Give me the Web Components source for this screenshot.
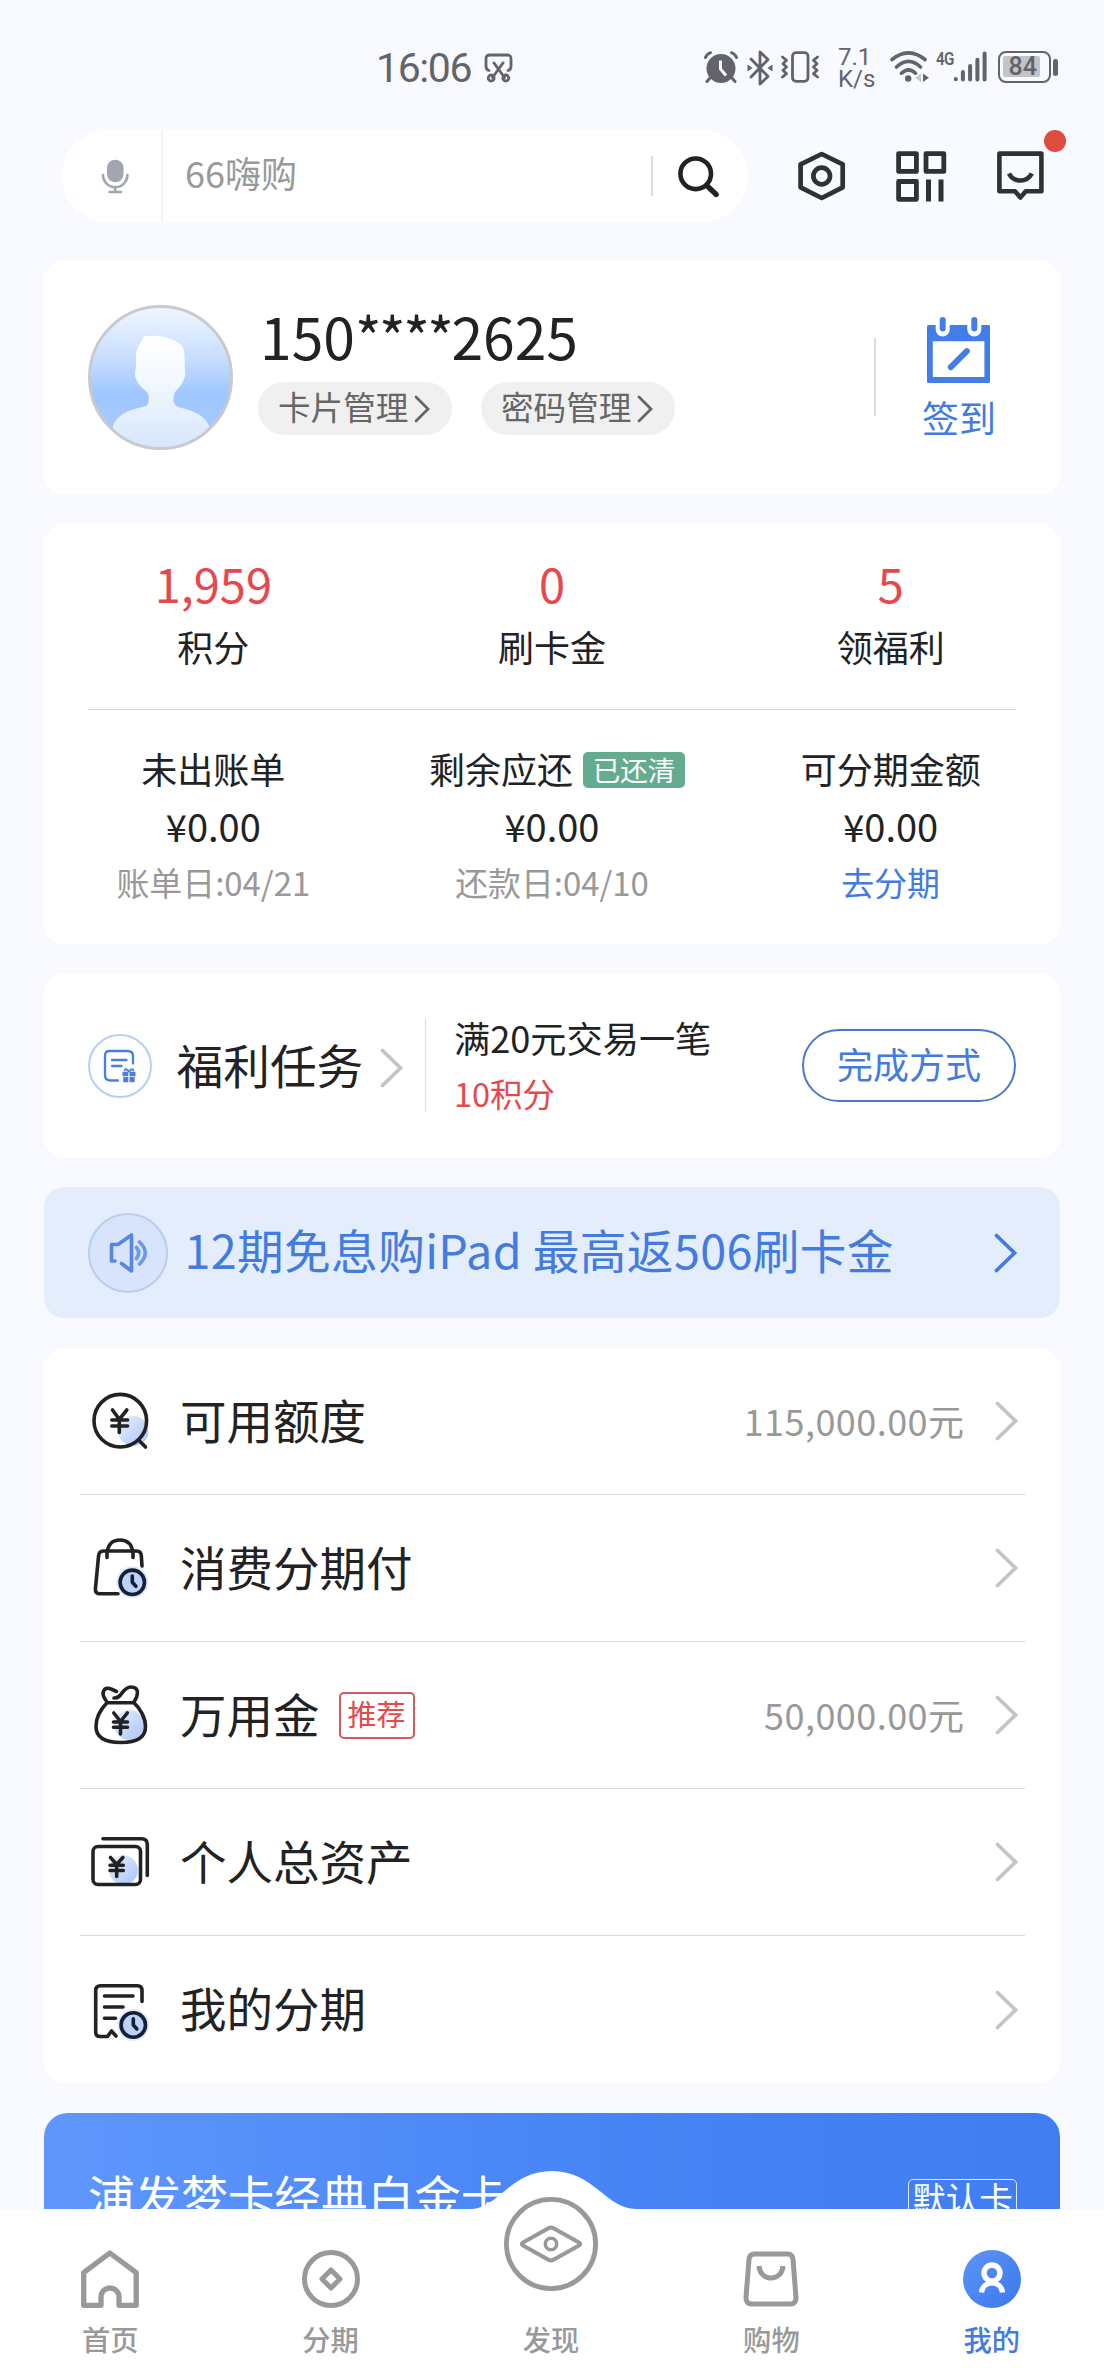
<!DOCTYPE html>
<html lang="zh-CN">
<head>
<meta charset="utf-8">
<title>我的</title>
<style>
html,body{margin:0;padding:0}
body{width:1104px;height:2376px;overflow:hidden;background:#f8faff;font-family:"Noto Sans CJK SC","Noto Sans",sans-serif;color:#222;-webkit-font-smoothing:antialiased}
</style>
</head>
<body>
<mine-page></mine-page>
<script>
const define = (name, html, init) => {
  const tpl = document.createElement('template');
  tpl.innerHTML = html;
  customElements.define(name, class extends HTMLElement {
    constructor() {
      super();
      this.attachShadow({mode: 'open'}).append(tpl.content.cloneNode(true));
    }
    connectedCallback() { if (init) init(this, this.shadowRoot); }
  });
};

const DEFS = `<defs><linearGradient id="g" x1="0" y1="0" x2="1" y2="1"><stop offset="0" stop-color="#e6effe"/><stop offset="1" stop-color="#a9c5fb"/></linearGradient></defs>`;
const CLOCK = (x, y) => `<circle cx="${x}" cy="${y}" r="16" fill="#dfeafe" stroke="none"/><circle cx="${x}" cy="${y}" r="12.2" fill="#bcd2fb" stroke="#142033" stroke-width="3.6"/><path d="M${x} ${y-6.2}V${y}l3.6 4" stroke="#142033" stroke-width="3.6"/>`;
const DARK = 'fill="none" stroke="#222" stroke-width="3.6" stroke-linecap="round" stroke-linejoin="round"';
const ICONS = {
  snip: [30, 30, `<g fill="none" stroke="#63646a" stroke-width="2.8" stroke-linecap="round"><path d="M5 17.5C2.8 17 2 16 2 13V6C2 3 3.2 2 6 2h17c3 0 4 1 4 4v7c0 3-.8 4-3 4.500M10 10l10.500 14.500M19 10L8.500 24.500"/><circle cx="7.200" cy="25" r="3"/><circle cx="21.800" cy="25" r="3"/></g>`],
  alarm: [34, 32, `<circle cx="17" cy="17.500" r="14.500" fill="#63646a"/><path d="M16.500 9.500v8.500l5.500 6.500" fill="none" stroke="#f8faff" stroke-width="3"/><path d="M1.500 6.500Q3 3 6.500 1.700M32.500 6.500Q31 3 27.500 1.700M6 27l-3 3.500M28 27l3 3.500" fill="none" stroke="#63646a" stroke-width="3" stroke-linecap="round"/>`],
  bt: [26, 36, `<path d="M4 9l17 17.500-8 7.500V2l8 7.500L4 27" fill="none" stroke="#63646a" stroke-width="2.800" stroke-linejoin="round" stroke-linecap="round"/><path d="M.5 14.500l5 3.500-5 3.500zM25.500 14.500l-5 3.500 5 3.500z" fill="#63646a"/>`],
  vibrate: [38, 32, `<g fill="none" stroke="#63646a" stroke-width="2.800" stroke-linejoin="round" stroke-linecap="round"><rect x="11.500" y="1.700" width="15.500" height="28.600" rx="3.500"/><path d="M1.500 6l4 3.300-3.500 3.400 3.500 3.300-3.500 3.300 3.500 3.400-4 3.300M36.500 6l-4 3.300 3.500 3.400-3.500 3.300 3.500 3.300-3.500 3.400 4 3.300"/></g>`],
  wifi: [40, 32, `<g fill="none" stroke="#63646a" stroke-width="3.600" stroke-linecap="round"><path d="M2 8.500Q18.500-4.800 35 8.500M6.500 16Q18.500 4.800 30.500 16M11.500 22.200Q18.500 15.500 25.500 22.200"/></g><circle cx="18.200" cy="27.500" r="3.200" fill="#63646a"/><path d="M31 22.500v8.500l-6-4.200z" fill="#c4c6ca"/><path d="M33 22.500v8.500l6-4.200z" fill="#63646a"/>`],
  signal: [34, 32, `<g stroke="#63646a" stroke-width="4" stroke-linecap="round"><path d="M2.800 28v.3M9.900 21v7.500M17.100 15v13.500M24.400 8.800v19.700M31.600 2.500v26"/></g>`],
  mic: [30, 38, `<rect x="7" y="1.700" width="16.500" height="22.600" rx="8.200" fill="#a3a6b1"/><path d="M3 17a12.200 12.200 0 0 0 24.400 0M15.200 29v5M9.500 34h11.500" fill="none" stroke="#a3a6b1" stroke-width="2.600" stroke-linecap="round"/>`],
  search: [44, 44, `<circle cx="19.700" cy="19.800" r="15.300" fill="none" stroke="#222" stroke-width="4.600"/><path d="M30.800 31.500l9.400 9" stroke="#222" stroke-width="5.200" stroke-linecap="round"/>`],
  hex: [48, 50, `<g fill="none" stroke="#2f3133" stroke-width="4.700" stroke-linejoin="round"><path d="M23.700 3L44.700 13.300V36.300L23.700 47 2.600 36.300V13.300Z"/><circle cx="23.700" cy="25" r="8.300"/></g>`],
  qr: [51, 51, `<g fill="none" stroke="#2f3133" stroke-width="4.800" stroke-linejoin="round"><rect x="2.600" y="2.600" width="17.800" height="17.800"/><rect x="30" y="2.600" width="17.800" height="17.800"/><rect x="2.600" y="30.500" width="17.800" height="17.800"/></g><path d="M30 28.500h5v22h-5zM42.500 28.500h5v22h-5z" fill="#2f3133"/>`],
  msg: [47, 51, `<g fill="none" stroke="#2f3133" stroke-width="4.600"><path stroke-linejoin="round" d="M2.400 2.600H44.400V40.300H28.800L23.400 46.500 18 40.300H2.400Z"/><path d="M12 22.500Q15.500 29.500 23.300 29.500T34.800 22.500"/></g>`],
  avatar: [145, 145, `<defs><linearGradient id="a" x1="0" y1="0" x2="0" y2="1"><stop offset="0" stop-color="#f0f6ff"/><stop offset=".35" stop-color="#c9dffe"/><stop offset=".62" stop-color="#9fc6ff"/><stop offset="1" stop-color="#a9cbfd"/></linearGradient><linearGradient id="p" x1="0" y1="0" x2="0" y2="1"><stop offset="0" stop-color="#fff"/><stop offset=".4" stop-color="#f3f8ff"/><stop offset="1" stop-color="#d6e6fc"/></linearGradient><clipPath id="c"><circle cx="72.500" cy="72.500" r="70"/></clipPath></defs><circle cx="72.500" cy="72.500" r="71" fill="url(#a)"/><path clip-path="url(#c)" fill="url(#p)" d="M56 31.500C72 29 88 34 94 41 98 47 96 57 97 65 99 71 94 80 87 87 85 93 84 99 90 102 102 105 117 109 121 121L127 145H18L25 121C30 107 46 104 58 101 62 98 61 90 59 87 51 81 45 73 47.500 65 49 57 46 47 51 40 54 37 54 34 56 31.500Z"/><circle cx="72.500" cy="72.500" r="71" fill="none" stroke="#c8cacd" stroke-width="3"/>`],
  calendar: [68, 70, `<rect x="2" y="10" width="63" height="58" rx="1.500" fill="#437de9"/><path d="M7.800 26.300h51.600v35.600H7.800z" fill="#fff"/><g stroke-linecap="round"><path d="M17.700 3v11.500M49.300 3v11.500" stroke="#fff" stroke-width="14"/><path d="M17.700 5v8.500M49.300 5v8.500" stroke="#437de9" stroke-width="6"/><path d="M25.800 52.200l16-16" stroke="#437de9" stroke-width="6"/></g>`],
  task: [64, 64, `<circle cx="32" cy="32" r="31" fill="#fdfeff" stroke="#b9cff2" stroke-width="2"/><g fill="none" stroke="#4a7fe0" stroke-width="2.300" stroke-linecap="round"><path d="M30 46.500H22.500C18.500 46.500 17 44.500 17 41V21.500C17 18.500 18.500 17 21.500 17H39.500C43.500 17 45 18.500 45 22V29.500M24 26h14.500M24 32h9.500"/></g><path d="M34.500 37.800h5.800v4.400h-5.800zM41.500 37.800h6v4.400h-6zM35.200 43h5.100v5.300h-5.100zM41.500 43h5.200v5.300h-5.200z" fill="#4a7fe0"/><path d="M41 38c-2-4-5-3-4-1M41 38c2-4 5-3 4-1" fill="none" stroke="#4a7fe0" stroke-width="1.800"/>`],
  speaker: [80, 80, `<circle cx="40" cy="40" r="39" fill="#d7e4fb" stroke="#bacdee" stroke-width="2"/><g fill="none" stroke="#5587e0" stroke-width="3.600" stroke-linecap="round" stroke-linejoin="round"><path d="M27 48H23.500V31.500H30L43.500 22V58L33.500 50.500"/></g><g fill="none" stroke="#6b98ea" stroke-width="3.600" stroke-linecap="round"><path d="M48.500 34.500Q53 40 48.500 45.500M51.500 29Q63 40 51.500 51"/></g>`],
  quota: [64, 64, `${DEFS}<circle cx="45.500" cy="42" r="15" fill="url(#g)"/><g ${DARK}><circle cx="32.300" cy="31.700" r="26.300"/><path d="M24.500 21l6.800 9.300 7.500-9.300M31.300 30.500V43.500M23.800 31h15.800M23.800 37h15.800M52 52.500l5.500 5.500"/></g>`],
  bagpay: [64, 64, `<g ${DARK}><path d="M30 57.800H12C8.500 57.800 7.200 56 7.400 53L10.600 19.500C11 16.500 12.500 15 15.500 15H48.500C52 15 53 16.500 53.300 19.500L54 30M19 21.500V17C20 8 25 4 32 4S44 8 45 17V21.500"/>${CLOCK(44.300, 46.300)}</g>`],
  sack: [64, 64, `${DEFS}<circle cx="41" cy="42" r="15" fill="url(#g)"/><g ${DARK}><path d="M19 19C11 9 17 3 23 6L28.500 8.500M26 15C34 16 34 4 43 4 51 4 51 11 46 19M19 19.800H46C52 25 57.500 35 57.500 43.500 57.500 55 48 59.500 33 59.500S8 55 8 43.500C8 35 13 26 19 19.800M25.800 30l6.700 8.500 6.800-8.500M32.500 38.500V51M25.500 39h14M25.500 44.300h14"/></g>`],
  assets: [64, 64, `${DEFS}<circle cx="35.500" cy="40" r="14.500" fill="url(#g)"/><g ${DARK}><rect x="5" y="16.500" width="47.500" height="38" rx="5"/><path d="M15 8.700H53.500C57.500 8.700 59.300 10.500 59.300 14.500V45.500M22.500 27.500l6.200 7 6.200-7M28.700 34.500V46.500M22 35.300h13.300M22 40.500h13.300"/></g>`],
  bill: [64, 64, `<g ${DARK}><path d="M54 23.500V12.500C54 9 52.500 7.700 49.500 7.700H12.500C9.300 7.700 7.700 9 7.700 12.500V54C7.700 57 9 58.500 12 58.500H19.500L23.500 53 28 58M16.500 18h28.500M16.500 29h18.500M16.500 40.300h11"/>${CLOCK(45.300, 47)}</g>`],
  home: [60, 60, `<path d="M3.700 56.300V23.700L29.800 4 56.200 23.700V56.300H39V48a9 9 0 0 0-18 0V56.300Z" fill="none" stroke="#999" stroke-width="5.300" stroke-linejoin="round"/>`],
  coin: [60, 60, `<g fill="none" stroke="#999"><circle cx="30" cy="30" r="26.500" stroke-width="5"/><path d="M30 21L39 30 30 39 21 30Z" stroke-width="5" stroke-linejoin="round"/></g>`],
  eye: [94, 94, `<g fill="none" stroke="#999"><circle cx="47" cy="47" r="44.600" stroke-width="4.800"/><path d="M44 31.500Q47 29.500 50 31.500L75 45.500Q77.500 47 75 48.500L50 62.500Q47 64.500 44 62.500L19 48.500Q16.500 47 19 45.500Z" stroke-width="4"/><circle cx="47" cy="47" r="5.700" stroke-width="3.600"/></g>`],
  bag: [60, 60, `<g fill="none" stroke="#999" stroke-width="5"><path d="M13.500 5H46.500Q51.500 5 52 10.500L55 48.500Q55 55 49.500 55H10.500Q5 55 5 48.500L8 10.500Q8.500 5 13.500 5Z"/><path d="M18 17C19 33 41 33 42 17"/></g>`],
  me: [60, 60, `<defs><linearGradient id="m" x1="0" y1="0" x2="1" y2="1"><stop offset="0" stop-color="#5c94f8"/><stop offset="1" stop-color="#3b78ec"/></linearGradient></defs><circle cx="30" cy="30" r="29" fill="url(#m)"/><g fill="none" stroke="#fff" stroke-width="5.400"><circle cx="30" cy="24" r="8"/><path d="M19.500 43.500C21 30.500 39 30.500 40.500 43.500"/></g>`],
  chev: [24, 40, `<path d="M2.500 2.500L20.500 20 2.500 37.500" fill="none" stroke="currentColor" stroke-width="3.700" stroke-linecap="round"/>`],
  chevs: [18, 28, `<path d="M3 2L15 14 3 26" fill="none" stroke="currentColor" stroke-width="2.800" stroke-linecap="round"/>`]
};
define('ui-icon', `<style>:host{display:block;flex:none;line-height:0}svg{display:block}</style><span></span>`, (el, root) => {
  const [w, h, body] = ICONS[el.getAttribute('name')];
  root.querySelector('span').innerHTML = `<svg width="${w}" height="${h}" viewBox="0 0 ${w} ${h}">${body}</svg>`;
});

define('status-bar', `<style>
:host{display:flex;height:130px;box-sizing:border-box;padding:50px 45px 0 376px;align-items:flex-start;color:#63646a;font-family:Roboto,"Noto Sans",sans-serif}
.time{font-size:41px;line-height:36px;letter-spacing:-1.400px;width:108px;font-weight:400}
.snip{padding-top:3px;width:220px}
.speed{font-size:24px;width:52px;margin-top:-7px}
.speed span{display:block;height:21.500px;line-height:28px}
.g{font-size:19px;line-height:18px;font-weight:600;width:17px;letter-spacing:-1px;transform:scaleX(.8);transform-origin:left}
.bat{box-sizing:border-box;width:53px;height:32px;border:2.500px solid #63646a;border-radius:8px;padding:3px;margin-top:1px}
.fill{display:block;width:37px;height:21px;background:#c3c4c8;border-radius:2px;font-size:25px;font-weight:500;line-height:22px;padding-left:6px;white-space:nowrap;box-sizing:border-box}
.nub{width:5px;height:17px;border-radius:3px;background:#63646a;margin:9px 0 0 2px}
</style>
<div class="time">16:06</div><div class="snip"><ui-icon name="snip"></ui-icon></div>
<ui-icon name="alarm" style="padding-top:1px;width:43px"></ui-icon>
<ui-icon name="bt" style="width:34px"></ui-icon>
<ui-icon name="vibrate" style="padding-top:1px;width:57px"></ui-icon>
<div class="speed"><span>7.1</span><span>K/s</span></div>
<ui-icon name="wifi" style="padding-top:1px;width:46px"></ui-icon>
<div class="g">4G</div>
<ui-icon name="signal" style="padding-top:1px;width:44.500px"></ui-icon>
<div class="bat"><span class="fill">84</span></div><div class="nub"></div>`);

define('search-header', `<style>
:host{display:flex;height:92px;padding-left:62px;align-items:center}
.pill{display:flex;align-items:center;width:686px;height:92px;border-radius:46px;background:#fff;margin-right:50px}
.mic{box-sizing:border-box;width:101px;height:92px;padding:28px 0 0 38px;border-right:2px solid #f2f3f6}
.q{flex:1;padding-left:22px;font-size:36px;line-height:40px;color:#999;margin-top:-8px}
.go{border-left:2px solid #ddd;height:40px;display:flex;align-items:center;padding:0 28px 0 23px}
.hex{width:98px}.qr{width:101px}
.msg{position:relative;padding-top:1px}
.dot{position:absolute;left:46.500px;top:-20.500px;width:22.500px;height:22.500px;border-radius:50%;background:#de4c3d}
</style>
<div class="pill"><div class="mic"><ui-icon name="mic"></ui-icon></div><div class="q">66嗨购</div><div class="go"><ui-icon name="search"></ui-icon></div></div>
<ui-icon class="hex" name="hex"></ui-icon><ui-icon class="qr" name="qr"></ui-icon><div class="msg"><ui-icon name="msg"></ui-icon><div class="dot"></div></div>`);

define('ui-card', `<style>:host{display:block;box-sizing:border-box;margin:0 44px;background:#fff;border-radius:20px;flex:none}</style><slot></slot>`);

define('pill-link', `<style>:host{display:flex;align-items:center;box-sizing:border-box;width:194px;height:53px;border-radius:27px;background:#f0f0f0;padding-left:20px;font-size:32.600px;line-height:40px;color:#666}
span{margin-top:-6px}ui-icon{margin-left:5px}</style><span><slot></slot></span><ui-icon name="chevs"></ui-icon>`);

define('profile-panel', `<style>
:host{display:flex;height:234px;padding-left:44px;align-items:flex-start}
.av{margin-top:45px}
.info{padding:42px 0 0 25px;flex:1}
.no{font-size:57px;line-height:66px;height:80px;margin-left:2px;display:flex}
.st{letter-spacing:-2.500px}
.links{display:flex;gap:29px}
.sign{display:flex;align-items:center;flex-direction:column;width:140px;padding:55px 0 0 0;margin-right:31px;color:#437bdf;font-size:37px;line-height:46px}
.line{width:2px;height:78px;background:#ddd;margin-top:78px;margin-right:13px}
.sign span{margin-top:8.500px}
</style>
<ui-icon class="av" name="avatar"></ui-icon>
<div class="info"><div class="no"><span>150</span><span class="st">****</span><span>2625</span></div><div class="links"><pill-link>卡片管理</pill-link><pill-link>密码管理</pill-link></div></div>
<div class="line"></div>
<div class="sign"><ui-icon name="calendar"></ui-icon><span>签到</span></div>`);

define('stat-cell', `<style>
:host{display:flex;flex-direction:column;align-items:center;flex:1 1 0}
.n{font-size:47px;line-height:50px;color:#e5494d;height:64px}.l{font-size:36px;line-height:48px}
</style><div class="n"></div><div class="l"><slot></slot></div>`, (el, r) => { r.querySelector('.n').textContent = el.getAttribute('value'); });

define('bill-cell', `<style>
:host{display:flex;flex-direction:column;align-items:center;flex:1 1 0;white-space:nowrap}
.t{font-size:36px;line-height:48px;height:57px;display:flex}
.v{font-size:38px;line-height:50px;height:58.500px}
.d{font-size:32.900px;line-height:44px;color:var(--note,#999)}
.tag{box-sizing:border-box;background:#64ac8f;color:#fff;font-size:27.500px;line-height:34px;height:36px;width:102px;text-align:center;border-radius:5px;margin:8px -10px 0 10px}
</style><div class="t"><span></span></div><div class="v"></div><div class="d"><slot></slot></div>`, (el, r) => {
  r.querySelector('.t span').textContent = el.getAttribute('label');
  r.querySelector('.v').textContent = el.getAttribute('value');
  if (el.hasAttribute('tag')) { const t = document.createElement('div'); t.className = 'tag'; t.textContent = el.getAttribute('tag'); r.querySelector('.t').append(t); }
});

define('account-panel', `<style>
:host{display:flex;flex-direction:column;height:420px}
.a,.b{display:flex}.a{padding-top:33.500px;height:151px}
hr{border:0;height:1px;background:#d8d8d8;margin:0 44px;width:928px;flex:none}
.b{padding-top:34.500px}
</style>
<div class="a"><stat-cell value="1,959">积分</stat-cell><stat-cell value="0">刷卡金</stat-cell><stat-cell value="5">领福利</stat-cell></div>
<hr>
<div class="b"><bill-cell label="未出账单" value="¥0.00">账单日:04/21</bill-cell><bill-cell label="剩余应还" value="¥0.00" tag="已还清">还款日:04/10</bill-cell><bill-cell label="可分期金额" value="¥0.00" style="--note:#437bdf">去分期</bill-cell></div>`);

define('task-panel', `<style>
:host{display:flex;align-items:center;height:183px;padding:0 44px}
.t{font-size:46.700px;line-height:56px;margin:-4px 0 0 24.500px;width:203.500px}
.c{color:#c4c4c4;width:45px;margin-top:4px}
.d{height:93px;border-left:1.500px solid #ddd;margin-right:28px}
.i{flex:1;font-size:36.200px;line-height:48px;padding-top:0}
.i p{margin:-2px 0 0;height:57px}.i small{display:block;font-size:32.500px;color:#e5494d;line-height:46px}
.b{box-sizing:border-box;width:214px;height:73px;border:2px solid #4a7ac9;border-radius:37px;text-align:center;font-size:36px;line-height:65px;color:#437bdf}
</style>
<ui-icon name="task"></ui-icon><div class="t">福利任务</div><ui-icon class="c" name="chev"></ui-icon><div class="d"></div>
<div class="i"><p>满20元交易一笔</p><small>10积分</small></div><div class="b">完成方式</div>`);

define('notice-panel', `<style>
:host{display:flex;align-items:center;height:131px;padding:0 42px 0 44px;color:#437bdf;background:#e4edfb;border-radius:20px}
.t{flex:1;font-size:46.700px;letter-spacing:.350px;line-height:60px;margin:-8px 0 0 16.500px;white-space:nowrap}
</style><ui-icon name="speaker"></ui-icon><div class="t">12期免息购iPad 最高返506刷卡金</div><ui-icon name="chev"></ui-icon>`);

define('menu-row', `<style>
:host{display:flex;align-items:center;box-sizing:border-box;height:147px;margin:0 35.500px;padding:0 6px 0 8.500px;border-bottom:1px solid #d9d9d9}
:host(:last-of-type){border-bottom:0}
.t{font-size:46.500px;line-height:60px;margin:-5px 0 0 28px}
.tag{box-sizing:border-box;width:76px;height:47px;border:2px solid #d9565a;border-radius:5px;color:#e5494d;font-size:29px;line-height:39px;text-align:center;margin-left:19px}
.v{flex:1;text-align:right;font-size:36px;letter-spacing:.450px;line-height:48px;color:#999;margin:-2px 30px 0 0}
.c{color:#c4c4c4}
</style><span class="ic"></span><div class="t"><slot></slot></div><div class="v"></div><ui-icon class="c" name="chev"></ui-icon>`, (el, r) => {
  const i = document.createElement('ui-icon');
  i.setAttribute('name', el.getAttribute('icon'));
  r.querySelector('.ic').replaceWith(i);
  r.querySelector('.v').textContent = el.getAttribute('value') || '';
  if (el.hasAttribute('tag')) { const t = document.createElement('div'); t.className = 'tag'; t.textContent = el.getAttribute('tag'); r.querySelector('.t').after(t); }
});

define('bank-card', `<style>
:host{display:flex;justify-content:space-between;align-items:flex-start;box-sizing:border-box;height:263px;margin:0 44px;flex:none;border-radius:24px;background:linear-gradient(90deg,#5f97fc,#4886f6 50%,#3f7df1);color:#fff;padding:54px 43px 0 44px}
.n{font-size:46.600px;line-height:56px}
.d{box-sizing:border-box;width:109px;height:48px;border:1.500px solid #dfe9fd;border-radius:5px;font-size:33.600px;line-height:36px;text-align:center;margin-top:12px}
</style><div class="n">浦发梦卡经典白金卡</div><div class="d">默认卡</div>`);

define('nav-tab', `<style>
:host{display:flex;flex-direction:column;align-items:center;justify-content:flex-end;flex:1 1 0;height:205px;color:#999;font-size:28.300px;font-weight:500;line-height:36px;padding-bottom:19px}
:host([active]){color:#437bdf}
ui-icon{margin-bottom:12px}
:host([big]) ui-icon{margin-bottom:30px}
</style><span class="ic"></span><slot></slot>`, (el, r) => {
  const i = document.createElement('ui-icon');
  i.setAttribute('name', el.getAttribute('icon'));
  r.querySelector('.ic').replaceWith(i);
});

define('nav-bar', `<style>
:host{position:absolute;left:0;bottom:0;width:1104px;height:167px;display:flex;align-items:flex-end;background:#fff;box-sizing:border-box;padding-right:2px}
.hump{position:absolute;left:470px;top:-39px}
nav-tab{position:relative;box-sizing:border-box}
</style><svg class="hump" width="166" height="41" viewBox="0 0 166 41"><path d="M0 39C28 39 40 1 82 1S136 39 166 39V41H0Z" fill="#fff"/></svg>
<nav-tab icon="home">首页</nav-tab><nav-tab icon="coin">分期</nav-tab><nav-tab icon="eye" big>发现</nav-tab><nav-tab icon="bag">购物</nav-tab><nav-tab icon="me" active>我的</nav-tab>`);

define('mine-page', `<style>
:host{display:flex;flex-direction:column;position:relative;width:1104px;height:2376px;overflow:hidden}
main{display:flex;flex-direction:column;gap:30px;padding-top:38px}
</style>
<status-bar></status-bar><search-header></search-header>
<main>
<ui-card><profile-panel></profile-panel></ui-card>
<ui-card><account-panel></account-panel></ui-card>
<ui-card><task-panel></task-panel></ui-card>
<ui-card><notice-panel></notice-panel></ui-card>
<ui-card><menu-row icon="quota" value="115,000.00元">可用额度</menu-row><menu-row icon="bagpay">消费分期付</menu-row><menu-row icon="sack" tag="推荐" value="50,000.00元">万用金</menu-row><menu-row icon="assets">个人总资产</menu-row><menu-row icon="bill">我的分期</menu-row></ui-card>
<bank-card></bank-card>
</main>
<nav-bar></nav-bar>`);
</script>
</body>
</html>
